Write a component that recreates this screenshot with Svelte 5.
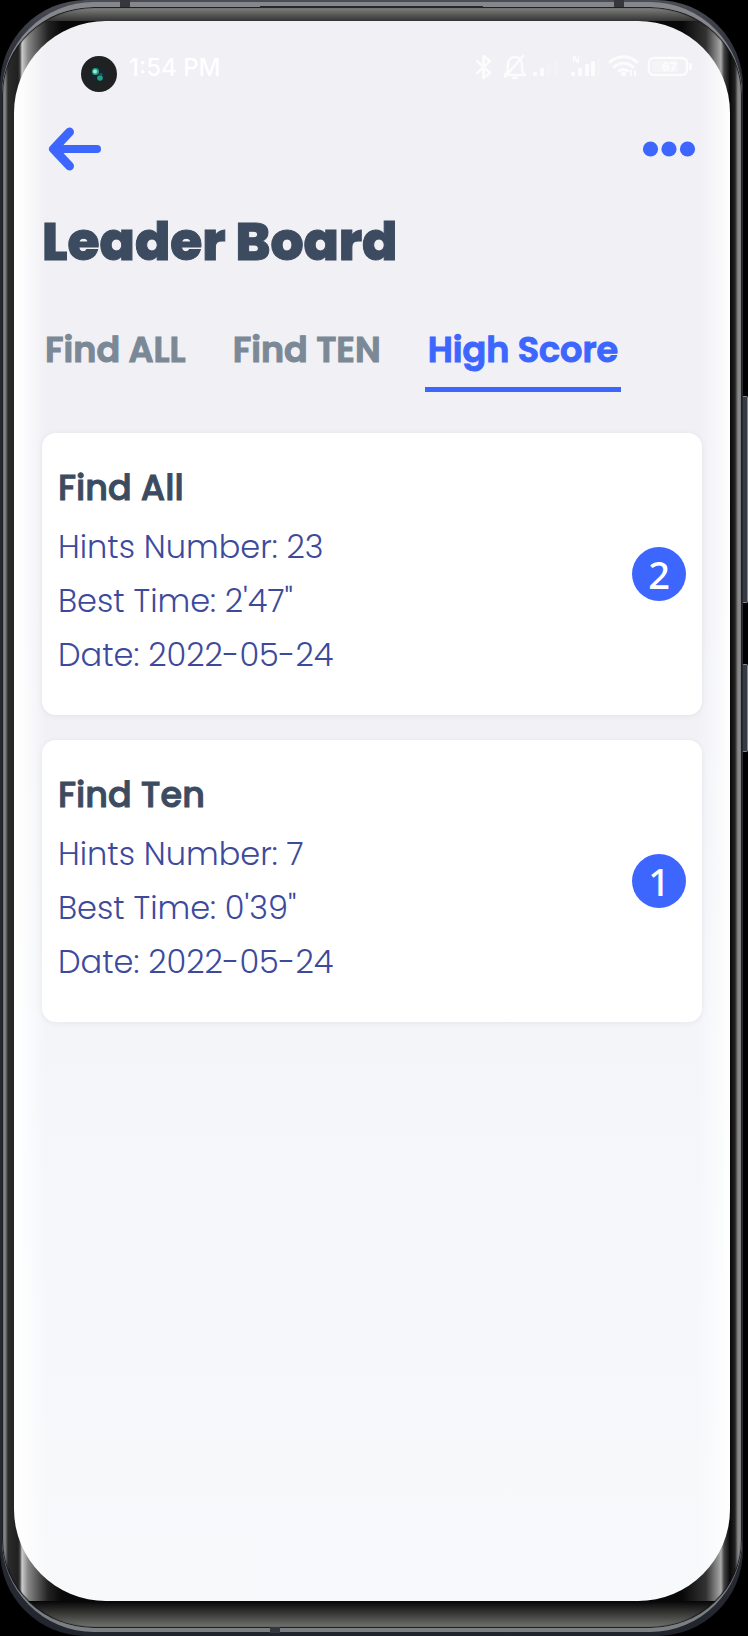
<script>
  const tabs = ['Find ALL', 'Find TEN', 'High Score'];
  let active = $state('High Score');

  const scores = [
    { title: 'Find All', hints: 23, best: `2'47"`, date: '2022-05-24', rank: 2 },
    { title: 'Find Ten', hints: 7, best: `0'39"`, date: '2022-05-24', rank: 1 }
  ];
</script>

<div class="stage">
  <span class="side-key volume"></span>
  <span class="side-key power"></span>
  <div class="phone">
    <span class="seam seam-top-left"></span>
    <span class="seam seam-top-right"></span>
    <span class="seam seam-bottom"></span>
    <span class="speaker"></span>
    <div class="bezel">
      <div class="screen">
        <div class="status">
          <svg class="camera" viewBox="0 0 36 36" width="36" height="36" aria-hidden="true">
            <circle cx="18" cy="18" r="18" fill="#202122" />
            <circle cx="17" cy="18" r="8" fill="#17262b" />
            <circle cx="14.500" cy="15.500" r="3.500" fill="#2a9d86" />
            <circle cx="14" cy="15.500" r="2" fill="#8ff0d8" />
            <circle cx="19" cy="22" r="2.800" fill="#22a08a" />
            <circle cx="20" cy="18.500" r="1.500" fill="#285477" />
          </svg>
          <span class="clock">1:54 PM</span>
          <svg class="indicators" viewBox="0 0 220 28" width="220" height="28" aria-hidden="true">
            <g fill="none" stroke="#fff" stroke-width="2.600" stroke-linejoin="round" stroke-linecap="round">
              <path d="M3 8 16 20 9.500 25V3L16 8 3 20" />
              <path d="M33 22h18c-3-3-3-5-3-10 0-5-3-8-7-8s-7 3-7 8c0 5 0 7-3 10zM31 24 49 3M39 25h4" />
              <path d="M136 9c8-7 19-7 27 0M140 14c6-5 13-5 19 0M145 18c3-2 6-2 9 0" stroke-width="3" />
              <rect x="175" y="5" width="38" height="17" rx="5" />
            </g>
            <g fill="#fff">
              <rect x="59" y="19" width="4" height="4" rx="1" />
              <rect x="66" y="15" width="4" height="8" rx="1" />
              <rect x="73" y="12" width="4" height="11" rx="1" opacity=".3" />
              <rect x="80" y="8" width="4" height="15" rx="1" opacity=".3" />
              <rect x="97" y="19" width="4" height="4" rx="1" />
              <rect x="104" y="15" width="4" height="8" rx="1" />
              <rect x="111" y="11" width="4" height="12" rx="1" />
              <rect x="117" y="8" width="4" height="15" rx="1" />
              <rect x="123" y="5" width="3" height="18" rx="1" opacity=".3" />
              <path d="M99 10V3h2l3 4V3h1v7h-2l-3-4v4z" />
              <circle cx="149.500" cy="21" r="2.500" />
              <path d="M157 17v6M161 17v6" stroke="#fff" stroke-width="2" />
              <rect x="215" y="10" width="3" height="7" rx="1" />
              <rect x="178" y="8" width="26" height="11" rx="2" opacity=".4" />
            </g>
            <text x="195" y="18" text-anchor="middle" class="charge">67</text>
          </svg>
        </div>

        <header class="toolbar">
          <button type="button" aria-label="Back">
            <svg viewBox="0 0 54 46" width="54" height="46" stroke="#3d66ff" stroke-linecap="round" stroke-linejoin="round">
              <path d="M21.500 6 5.500 23 21.500 40" fill="none" stroke-width="9" />
              <path d="M7 23h42" fill="none" stroke-width="8" />
              <path d="M6 23 14 16v14z" fill="#3d66ff" stroke-width="3" />
            </svg>
          </button>
          <button type="button" aria-label="More">
            <svg viewBox="0 0 54 16" width="54" height="16" fill="#3d66ff">
              <circle cx="8.500" cy="8" r="7.600" />
              <circle cx="27" cy="8" r="7.600" />
              <circle cx="45.500" cy="8" r="7.600" />
            </svg>
          </button>
        </header>

        <h1>Leader Board</h1>

        <nav class="tabs">
          {#each tabs as tab}
            <button type="button" class:active={tab === active} onclick={() => (active = tab)}>{tab}</button>
          {/each}
        </nav>

        <main class="list">
          {#each scores as score}
            <article class="card">
              <div class="details">
                <h2>{score.title}</h2>
                <p>Hints Number: {score.hints}</p>
                <p>Best Time: {score.best}</p>
                <p>Date: {score.date}</p>
              </div>
              <span class="rank">{score.rank}</span>
            </article>
          {/each}
        </main>
      </div>
    </div>
  </div>
</div>

<style>
  :global(body) {
    background: #000;
  }

  .stage {
    position: relative;
    box-sizing: border-box;
    display: flex;
    min-height: 100vh;
    padding-right: 5px;
    background: #000;
    font-family: Poppins, Inter, 'Open Sans', sans-serif;
  }

  .phone {
    position: relative;
    box-sizing: border-box;
    display: flex;
    flex: 1;
    padding: 2px 1px 4px 2px;
    border-radius: 86px;
    background: linear-gradient(#4a4d54, #34373f 40px, #262931 90px, #262931 calc(100% - 40px), #20242d);
  }

  .bezel {
    box-sizing: border-box;
    display: flex;
    flex: 1;
    padding: 14px 12px 27px;
    border-top: 5px solid #85878c;
    border-bottom: 4px solid #7b7f82;
    border-radius: 92px;
    box-shadow: inset 0 0 1px 1px #15171b;
    background:
      linear-gradient(#858783, #333) top / 100% 14px no-repeat,
      linear-gradient(#050505, #747672) bottom / 100% 27px no-repeat,
      linear-gradient(
        to right,
        #777 0,
        #888 3px,
        #2b2b2b 6px,
        #202020 16px,
        #444 18px,
        #ccc 20px,
        #888 26px,
        #222 46px,
        #080808 60px,
        #080808 calc(100% - 60px),
        #333 calc(100% - 36px),
        #aaa calc(100% - 21px),
        #444 calc(100% - 18px),
        #080808 calc(100% - 12px),
        #222 calc(100% - 7px),
        #888 calc(100% - 4px),
        #888 100%
      );
  }

  .screen {
    box-sizing: border-box;
    flex: 1;
    min-width: 0;
    padding: 29px 28px;
    border-radius: 92px;
    background:
      linear-gradient(
        to right,
        #fff 0,
        #fffc 10px,
        #fff0 32px,
        #fff0 calc(100% - 32px),
        #fff9 calc(100% - 10px),
        #fff 100%
      ),
      linear-gradient(#f0f0f5, #f0f0f5 35%, #f4f6fa 70%, #f7f9fb);
  }

  .seam,
  .speaker,
  .side-key {
    position: absolute;
  }

  .seam {
    top: 0;
    width: 10px;
    height: 7px;
    background: #35373d;
  }

  .seam-top-left {
    left: 120px;
  }

  .seam-top-right {
    right: 119px;
  }

  .seam-bottom {
    top: auto;
    bottom: 3px;
    left: 270px;
    height: 6px;
  }

  .speaker {
    top: 6px;
    left: 35%;
    right: 35%;
    height: 2px;
    background: #25272b;
  }

  .side-key {
    box-sizing: border-box;
    right: 0;
    width: 6px;
    border: 1px solid #888b91;
    border-left-color: #30343c;
    border-radius: 2px;
    background: #363a42;
  }

  .volume {
    top: 396px;
    height: 207px;
  }

  .power {
    top: 664px;
    height: 88px;
  }

  .status {
    display: flex;
    align-items: center;
    height: 48px;
    padding: 0 8px 0 39px;
    color: #fff;
  }

  .clock {
    margin: 0 auto 12px 12px;
    font-family: Inter, sans-serif;
    font-size: 24px;
    font-weight: 500;
    line-height: 24px;
  }

  .indicators {
    margin-bottom: 14px;
    opacity: 0.85;
  }

  .charge {
    fill: #fff;
    font-size: 13px;
    font-weight: 700;
  }

  .toolbar {
    display: flex;
    align-items: center;
    justify-content: space-between;
    height: 46px;
    margin-top: 28px;
    padding: 0 6px;
  }

  button {
    display: block;
    padding: 0;
    border: 0;
    background: none;
    font-family: inherit;
    cursor: pointer;
  }

  button svg {
    display: block;
  }

  h1,
  h2,
  .tabs button {
    -webkit-text-stroke: 1px currentColor;
  }

  h1 {
    margin: 36px 0 0;
    color: #3c4b60;
    font-size: 52px;
    font-weight: 800;
    line-height: 68px;
  }

  .tabs {
    display: flex;
    gap: 41px;
    margin-top: 48px;
  }

  .tabs button {
    box-sizing: border-box;
    min-width: 146px;
    height: 68px;
    padding: 0 3px 12px;
    border-bottom: 5px solid transparent;
    color: #7b8896;
    font-size: 35px;
    font-weight: 600;
    line-height: 48px;
    text-align: left;
    white-space: nowrap;
  }

  .tabs .active {
    border-color: #3d66ff;
    color: #3d66ff;
  }

  .list {
    display: grid;
    gap: 25px;
    margin-top: 41px;
  }

  .card {
    display: flex;
    align-items: center;
    justify-content: space-between;
    padding: 0 16px;
    border-radius: 14px;
    background: #fff;
    box-shadow: 0 1px 6px #00000010;
  }

  .details {
    padding: 28px 0 33px;
  }

  h2,
  p {
    margin: 0;
    color: #3d4a9c;
    font-size: 32px;
    font-weight: 300;
    line-height: 54px;
  }

  h2 {
    margin-bottom: 5px;
    color: #3c4b60;
    font-size: 35px;
    font-weight: 500;
  }

  .rank {
    display: grid;
    place-items: center;
    width: 54px;
    height: 54px;
    border-radius: 50%;
    background: #3d66ff;
    color: #fff;
    font-family: 'Noto Sans', sans-serif;
    font-size: 38px;
    font-weight: 500;
    line-height: 52px;
  }
</style>
